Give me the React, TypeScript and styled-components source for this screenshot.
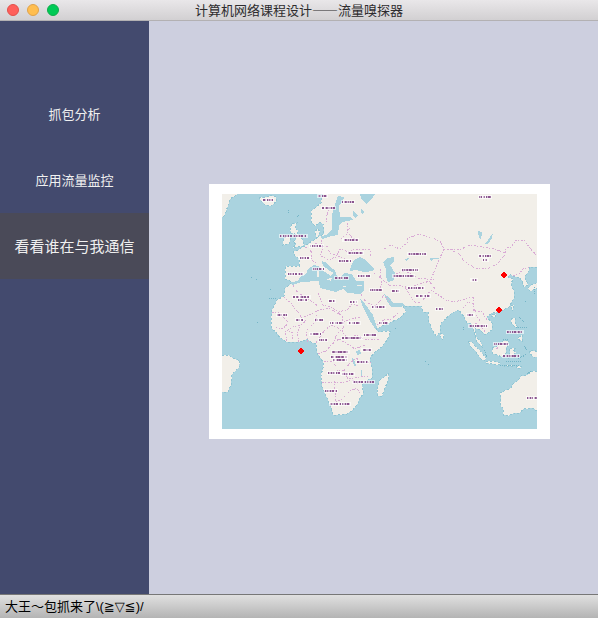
import React, { useState } from "react";
import styled, { createGlobalStyle } from "styled-components";

const GlobalStyle = createGlobalStyle`
  * { box-sizing: border-box; }
  body {
    margin: 0;
    font-family: "Noto Sans CJK SC", sans-serif;
    font-size: 13px;
  }
`;

const Window = styled.div`
  display: flex;
  flex-direction: column;
  min-height: 100vh;
  background: #cdcfdf;
`;

const TitleBar = styled.header`
  display: grid;
  grid-template-columns: 1fr auto 1fr;
  align-items: center;
  height: 21px;
  padding: 0 7px;
  background: linear-gradient(#e9e7e9, #d2d0d2);
  border-bottom: 1px solid #b3b1b3;
`;

const Lights = styled.div`
  display: flex;
  gap: 8px;
`;

const Light = styled.button<{ $fill: string; $edge: string }>`
  width: 12px;
  height: 12px;
  padding: 0;
  border: 1px solid ${(p) => p.$edge};
  border-radius: 50%;
  background: ${(p) => p.$fill};
`;

const Title = styled.h1`
  margin: 0;
  font-size: 13px;
  font-weight: 400;
  line-height: 20px;
  color: #2e2c2e;
`;

const Body = styled.div`
  display: flex;
  flex: 1;
`;

const Sidebar = styled.nav`
  display: flex;
  flex-direction: column;
  flex: 0 0 149px;
  padding-top: 60px;
  background: #434a6e;
`;

const NavButton = styled.button<{ $active: boolean }>`
  height: 66px;
  padding: 0 0 2px;
  border: 0;
  background: ${(p) => (p.$active ? "#4a4a58" : "transparent")};
  color: #f0f0f0;
  font-family: inherit;
  font-size: ${(p) => (p.$active ? 15 : 13)}px;
  white-space: nowrap;
`;

const Main = styled.main`
  display: flex;
  flex: 1;
  align-items: center;
  justify-content: center;
  padding: 8px 0 0 12px;
`;

const MapCard = styled.figure`
  width: 100%;
  max-width: 341px;
  margin: 0;
  padding: 10px 13px;
  background: #fff;
`;

const MapDrawing = styled.svg`
  display: block;
  width: 100%;
  height: auto;
  background: #aad3df;
`;

const StatusBar = styled.footer`
  height: 24px;
  padding: 0 5px;
  border-top: 1px solid #777;
  background: linear-gradient(#e0e0e0, #b4b4b4);
  color: #000;
  line-height: 24px;
  font-family: "Liberation Sans", "DejaVu Sans", "Noto Sans CJK SC", sans-serif;
`;

const LAND = [
  // Eurasia and Africa
  "M323 190L321 203L316 207L311 211L311 222L315 226L320 222L323 224L324 234L318 237L320 231L317 229L315 232L317 238L312 241L308 244L303 247L300 249L293 252L295 256L299 259L299 266L287 266L285 267L285 279L290 281L292 283L285 288L284 296L277 300L272 310L271 322L272 329L276 332L280 338L287 342L300 342L307 339L312 343L316 343L317 353L323 362L323 368L321 375L322 387L328 400L331 408L333 415L337 415L347 414L353 410L358 403L360 397L363 395L363 390L362 384L366 381L372 378L372 368L370 358L375 352L382 347L387 340L391 331L385 331L378 332L376 329L387 324L400 318L406 311L403 306L421 306L423 312L428 312L429 322L434 333L436 336L440 332L441 323L452 313L459 310L464 317L467 323L472 324L474 332L477 342L483 348L481 342L476 337L475 328L480 330L485 335L492 330L492 323L487 317L492 313L499 312L509 307L514 298L514 291L511 284L513 279L508 277L510 274L515 277L519 277L522 281L524 287L528 285L525 277L529 270L529 267L541 267L541 190Z",
  "M218 190H242L238 194L230 199L225 215L218 221Z",
  "M259 197L264 198L271 195L276 197L277 201L271 206L265 205L261 201Z",
  "M292 224L297 223L295 228L298 231L297 234L302 239L304 244L303 246L298 247L293 248L296 244L293 242L296 239L295 234L291 233L290 228Z",
  "M284 238L289 236L291 239L289 244L283 245Z",
  "M218 355L228 355L233 358L240 361L239 367L232 374L231 385L228 392L218 392Z",
  "M388 373L389 378L385 388L382 396L378 396L377 389L380 380L385 377Z",
  "M541 371L532 371L527 375L521 376L518 381L513 384L511 388L500 393L501 400L500 404L503 409L503 415L508 416L514 413L519 413L524 409L532 408L541 413Z",
  "M441 333L444 336L443 340L440 337Z",
  "M468 341L472 342L476 347L482 353L486 358L485 361L481 359L476 352L471 347Z",
  "M486 361L492 361L500 363L500 365L492 364L486 363Z",
  "M492 348L496 347L503 341L508 340L509 344L506 348L506 353L502 357L497 355L492 353Z",
  "M510 348L517 348L513 350L516 352L514 354L515 358L511 356L509 358Z",
  "M511 318L515 318L515 324L519 328L515 327L511 323Z M519 337L522 335L522 341L517 339Z M517 331L520 333L517 334Z",
  "M511 306L514 305L513 310L512 311Z M493 314L496 314L495 317L491 316Z",
  "M528 288L531 285L535 284L540 280V287L533 290L530 291Z",
  "M531 350L540 352V358L534 357L529 353Z",
  "M504 365H514V366H504Z M516 366H521V368H516Z",
];

const WATER = [
  // Baltic and the White Sea
  "M315 194H323L320 203L315 207Z",
  "M338 196L344 197L343 201L339 206L340 217L351 217L353 220L342 222L339 226L338 235L332 236L322 239L320 237L328 234L332 229L332 215L334 207Z",
  "M360 194H375L371 200L366 204L362 200Z",
  "M353 211L358 215L356 218L353 216Z M361 208L364 212L363 215L361 212Z",
  // Mediterranean and the Black Sea
  "M291 282L298 281L301 276L306 274L308 269L314 265L318 266L325 272L331 276L333 273L323 266L322 261L327 263L331 268L335 270L337 276L343 282L341 277L344 273L352 274L356 281L364 281L364 290L361 294L347 293L343 289L336 292L320 288L319 281L301 282L292 285Z",
  "M351 266L354 260L360 257L366 260L374 269L373 271L364 272L356 270L350 271Z",
  // Caspian Sea
  "M383 262L388 258L394 257L394 262L390 265L395 273L394 280L388 282L386 276L386 269Z",
  // Red Sea and Persian Gulf
  "M360 298L365 304L373 315L377 327L376 330L370 321L363 307Z",
  "M384 294L389 297L393 303L402 303L405 306L398 307L391 307L387 301Z",
  "M485 244L493 233L492 238L488 244Z M478 231L482 232L481 240L479 238Z",
  "M356 351L360 350L361 354L357 355Z M352 358L354 359L356 366L354 366Z M361 370H362V376H361Z",
  "M404 259L409 258L406 261Z M432 258H439V259H432Z M430 258L434 258L431 262Z",
];

const ISLANDS = "M331 273L333 272L333 275Z M317 271H319V277H317Z M326 279L332 278L331 281Z M343 286L349 287H343Z M357 285H362V286H357Z";

const COAST_SPECKS =
  "M288 210v3M297 217l2-2M251 277h2M256 279h2M270 289h2M269 298h8M257 322h1M425 361h2M428 364h1M395 328h2M463 327v3M524 322l-5-5M516 327h12M518 359l9-5M506 361h16M514 355h6M524 346l3 4M527 374l5-4M500 365h20M534 287v7M525 301h1M484 350l3 7M503 340l5-1";

const BORDERS = [
  "M305 247L312 252L311 260L316 263M315 243L321 247L327 246L330 253L337 256L345 259",
  "M321 240L323 249L320 255L328 260L336 257L340 249L349 252L355 249L370 250L370 257",
  "M348 223L347 231L352 238L357 240M341 239L347 234L350 227M330 207L327 215L326 222",
  "M384 249L390 245L400 249L407 243L408 238L420 234L432 238L440 241L444 249L451 250L458 253L465 262L475 268L487 269L497 264L505 255L506 248L511 247L516 240L524 240L529 247L537 256",
  "M451 250L461 249L471 245L482 247L495 249L505 253M444 249L439 260L434 272L430 282L435 289",
  "M374 273L382 279L390 286L400 285L408 290L416 285L430 281",
  "M396 274L405 271L418 278L434 280M405 286L410 296L416 303M380 269L382 285L378 291",
  "M418 303L425 298L431 290L440 296L446 300L455 302L461 300L473 297",
  "M463 308L468 302L473 304L476 315L480 321M473 297V310L482 312L487 320M475 323L481 327L486 333",
  "M272 313L278 312L284 318L289 323L282 329L276 327M287 341L285 332L293 327L301 325L308 319",
  "M284 297L291 303L302 318L311 314L319 310L329 308L342 316V323L350 319L361 317",
  "M293 285L298 293L310 300L319 307M318 293L323 305L331 307L342 315M316 343L324 331L331 325L342 330L347 339L357 335L366 340L380 339",
  "M308 342L306 331L315 322L317 315M299 342L297 333L301 325M292 339L293 333L287 330",
  "M318 354L326 351L332 344L339 339L349 345L355 349L364 345L368 347M324 361L334 362L337 370L344 371L348 379L360 377L368 376",
  "M322 382H344L354 380L359 385M334 381L336 402L342 399L350 391L357 388L360 394",
  "M344 371L350 363L356 358L364 363L371 362M333 344L337 334L344 327L342 316",
  "M361 294L366 302L376 306L384 295L390 302M377 325L384 320L391 319L398 313",
  "M358 306L352 304L347 310L337 312M503 344L496 349M513 276L519 274L523 269L529 267",
];

type Mark = [x: number, y: number, width: number];
const LABELS: Mark[] = [
  [263, 200, 10], [280, 236, 27], [310, 246, 13], [299, 258, 11], [288, 274, 15],
  [318, 196, 9], [322, 208, 13], [342, 202, 12], [343, 240, 15], [348, 253, 15],
  [339, 261, 12], [313, 269, 11], [335, 278, 13], [358, 276, 12], [370, 290, 12],
  [408, 254, 18], [402, 270, 16], [393, 276, 21], [392, 291, 7], [408, 288, 16],
  [479, 197, 12], [479, 256, 12], [483, 260, 5], [471, 280, 6],
  [293, 297, 17], [298, 300, 9], [277, 315, 10], [296, 320, 7], [315, 320, 8],
  [310, 334, 11], [329, 301, 6], [350, 302, 7], [330, 323, 13], [348, 323, 12],
  [372, 307, 13], [379, 323, 9], [342, 338, 20], [364, 335, 12], [362, 350, 9],
  [332, 352, 17], [331, 357, 16], [333, 360, 14], [357, 362, 11], [328, 373, 12],
  [342, 374, 12], [353, 382, 21], [325, 391, 12], [330, 404, 20],
  [416, 296, 14], [436, 309, 7], [467, 315, 7], [469, 326, 18],
  [507, 332, 16], [494, 344, 14], [503, 356, 16], [527, 398, 10],
  [319, 340, 8],
];

const HOSTS = [
  { x: 504, y: 275 },
  { x: 499, y: 310 },
  { x: 301, y: 351 },
];

const PAGES = ["抓包分析", "应用流量监控", "看看谁在与我通信"];

function TrafficMap() {
  return (
    <MapDrawing viewBox="222 194 315 235" shapeRendering="crispEdges" role="img" aria-label="通信地图">
      <g fill="#f2efe9" stroke="#91c5d3" strokeWidth="1" strokeDasharray="2 2">
        {LAND.map((d) => <path key={d} d={d} />)}
      </g>
      <g fill="#aad3df">
        {WATER.map((d) => <path key={d} d={d} />)}
      </g>
      <path d={ISLANDS} fill="#f2efe9" />
      <path d={COAST_SPECKS} fill="none" stroke="#75b5c7" strokeDasharray="1 1" />
      <g fill="none" stroke="#d9abd5" strokeWidth="1" strokeDasharray="2 1 1 2">
        {BORDERS.map((d) => <path key={d} d={d} />)}
      </g>
      {LABELS.map(([x, y, width], i) => (
        <g key={i} fill="none">
          <path d={`M${x - 1} ${y}h${width + 2}`} stroke="#fff" strokeWidth="4" strokeOpacity="0.6" />
          <path d={`M${x} ${y}h${width}`} stroke="#d3bcd5" strokeWidth="2" strokeDasharray="3 1 2 1" strokeDashoffset={i % 5} />
          <path d={`M${x} ${y}h${width}`} stroke="#a27aa6" strokeWidth="2" strokeDasharray="1 3 1 1 1 4" strokeDashoffset={i % 7} />
          <path d={`M${x} ${y}h${width}`} stroke="#8b5590" strokeWidth="2" strokeDasharray="2 2 1 4 1 1" strokeDashoffset={i % 6} />
        </g>
      ))}
      {HOSTS.map(({ x, y }) => (
        <path
          key={`${x}-${y}`}
          d={`M${x - 1} ${y - 3}h2v1h1v1h1v2h-1v1h-1v1h-2v-1h-1v-1h-1v-2h1v-1h1z`}
          fill="#f00"
        />
      ))}
    </MapDrawing>
  );
}

export default function App() {
  const [active, setActive] = useState(2);
  return (
    <Window lang="zh-CN">
      <GlobalStyle />
      <TitleBar>
        <Lights>
          <Light $fill="#ff5f5b" $edge="#e2504b" aria-label="关闭" />
          <Light $fill="#ffbe50" $edge="#e0a24a" aria-label="最小化" />
          <Light $fill="#00ca56" $edge="#10ac4b" aria-label="缩放" />
        </Lights>
        <Title>计算机网络课程设计——流量嗅探器</Title>
      </TitleBar>
      <Body>
        <Sidebar>
          {PAGES.map((label, i) => (
            <NavButton key={label} $active={i === active} onClick={() => setActive(i)}>
              {label}
            </NavButton>
          ))}
        </Sidebar>
        <Main>
          <MapCard>
            <TrafficMap />
          </MapCard>
        </Main>
      </Body>
      <StatusBar>大王～包抓来了\(≧▽≦)/</StatusBar>
    </Window>
  );
}
